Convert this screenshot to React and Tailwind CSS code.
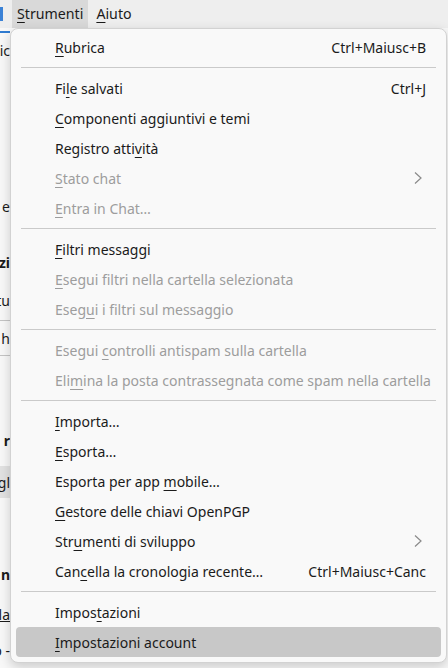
import React from "react";

/*  Access key label: underline one letter  */
function Label({ text, k }) {
  if (k == null) return <span>{text}</span>;
  return (
    <span>
      {text.slice(0, k)}
      <span className="underline underline-offset-[3px] decoration-1">{text[k]}</span>
      {text.slice(k + 1)}
    </span>
  );
}

function Item({ text, k, shortcut, disabled, submenu, active }) {
  return (
    <div
      className={
        "mx-[5px] flex h-[30px] items-center whitespace-nowrap rounded-[4px] pl-[39px] pr-[15px] " +
        (active ? "bg-[#c8c8c8] " : "") +
        (disabled ? "text-[#9d9d9d]" : "text-[#1b1b1b]")
      }
    >
      <Label text={text} k={k} />
      <div className="flex-1" />
      {shortcut && <span className="text-[#1b1b1b]">{shortcut}</span>}
      {submenu && (
        <svg width="10" height="14" viewBox="0 0 10 14" className="mr-[3px]">
          <path d="M2 1.5 8 7l-6 5.5" fill="none" stroke="#8a8a8a" strokeWidth="1.2" />
        </svg>
      )}
    </div>
  );
}

function Sep() {
  return (
    <div className="flex h-[11px] items-center px-[10px]">
      <div className="h-px w-full bg-[#cacaca]" />
    </div>
  );
}

/*  Bits of the window behind the menu, visible at the left edge  */
function Edge({ children, className = "" }) {
  return (
    <div className={"flex w-[10px] justify-end whitespace-nowrap " + className}>
      {children}
    </div>
  );
}

export default function App() {
  return (
    <div
      className="relative h-[668px] w-[448px] overflow-hidden bg-[#f8f8f8] text-[14px]"
      style={{ fontFamily: '"Noto Sans", "Open Sans", sans-serif' }}
    >
      {/* Menu bar */}
      <div className="flex h-[28px] items-center bg-[#eeeeee] text-[14.2px] text-[#1b1b1b]">
        <div className="h-[14px] w-[3px] bg-[#3b82d6]" />
        <div className="ml-[9px] flex h-full items-center bg-[#d9d9d9] px-[5px]">
          <Label text="Strumenti" k={0} />
        </div>
        <div className="ml-[8px] flex h-full items-center">
          <Label text="Aiuto" k={0} />
        </div>
      </div>

      {/* Background window */}
      <div className="flex flex-col text-[#1b1b1b]">
        <div className="h-[5px] w-[10px] border-b-2 border-[#2f7bd1]" />
        <Edge className="mt-[7px] h-[20px]">ic</Edge>
        <div className="h-[136px]" />
        <Edge className="h-[20px]">e</Edge>
        <div className="h-[36px]" />
        <Edge className="h-[20px] font-bold">zi</Edge>
        <div className="h-[18px]" />
        <Edge className="h-[20px]">tu</Edge>
        <div className="h-[10px]" />
        <Edge className="h-[36px] items-center border-y border-[#c4c4c4]">h</Edge>
        <div className="h-[74px]" />
        <Edge className="h-[20px] font-bold">r</Edge>
        <div className="h-[16px]" />
        <Edge className="h-[32px] items-center bg-[#e2e2e2]">gl</Edge>
        <div className="h-[66px]" />
        <Edge className="h-[20px] font-bold">n</Edge>
        <div className="h-[20px]" />
        <Edge className="h-[20px] underline">la</Edge>
        <div className="h-[16px]" />
        <Edge className="h-[20px]">p -</Edge>
      </div>

      {/* Dropdown */}
      <div className="absolute left-[10px] top-[28px] flex w-[437px] flex-col rounded-[8px] border border-[#d2d2d2] bg-[#f9f9f9] pb-[5px] pt-[3px] shadow-[0_4px_12px_rgba(0,0,0,0.18)]">
        <Item text="Rubrica" k={0} shortcut="Ctrl+Maiusc+B" />
        <Sep />
        <Item text="File salvati" k={2} shortcut="Ctrl+J" />
        <Item text="Componenti aggiuntivi e temi" k={0} />
        <Item text="Registro attività" k={13} />
        <Item text="Stato chat" k={0} disabled submenu />
        <Item text="Entra in Chat…" k={0} disabled />
        <Sep />
        <Item text="Filtri messaggi" k={0} />
        <Item text="Esegui filtri nella cartella selezionata" k={0} disabled />
        <Item text="Esegui i filtri sul messaggio" k={4} disabled />
        <Sep />
        <Item text="Esegui controlli antispam sulla cartella" k={7} disabled />
        <Item text="Elimina la posta contrassegnata come spam nella cartella" k={3} disabled />
        <Sep />
        <Item text="Importa…" k={0} />
        <Item text="Esporta…" k={0} />
        <Item text="Esporta per app mobile…" k={16} />
        <Item text="Gestore delle chiavi OpenPGP" k={0} />
        <Item text="Strumenti di sviluppo" k={3} submenu />
        <Item text="Cancella la cronologia recente…" k={3} shortcut="Ctrl+Maiusc+Canc" />
        <Sep />
        <Item text="Impostazioni" k={5} />
        <Item text="Impostazioni account" k={0} active />
      </div>
    </div>
  );
}
